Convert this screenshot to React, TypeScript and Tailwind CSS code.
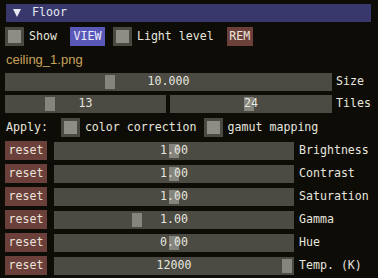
import React from 'react';

const mono = "font-['DejaVu_Sans_Mono',monospace] text-[11.6px] leading-none";

function Checkbox() {
  return (
    <div className="w-[19px] h-[19px] bg-[#4a4942] flex items-center justify-center shrink-0">
      <div className="w-[13px] h-[13px] bg-[#8d8c85]" />
    </div>
  );
}

// slider with value centered and grab at a given left offset
function Slider({ width, value, grab }: { width: number; value: string; grab: number }) {
  return (
    <div
      className="relative h-[18px] bg-[#4b4a43] flex items-center justify-center shrink-0"
      style={{ width }}
    >
      <div className="absolute top-[2px] bottom-[2px] w-[10px] bg-[#85847d]" style={{ left: grab }} />
      <span className={`relative text-[#e6e6df] ${mono}`}>{value}</span>
    </div>
  );
}

function ResetRow({ label, value, grab }: { label: string; value: string; grab: number }) {
  return (
    <div className="flex items-center h-[19px]">
      <div className={`w-[42px] h-[19px] bg-[#6b403a] text-[#ece4dc] flex items-center justify-center ${mono}`}>
        reset
      </div>
      <div className="ml-[7px]">
        <Slider width={240} value={value} grab={grab} />
      </div>
      <span className={`ml-[5px] text-[#e6e6df] ${mono}`}>{label}</span>
    </div>
  );
}

export default function App() {
  return (
    <div className="w-[378px] h-[278px] bg-[#0e0c07] overflow-hidden flex flex-col">
      {/* header */}
      <div className="mt-[4px] ml-[6px] w-[365px] h-[18px] bg-[#38386c] flex items-center">
        <svg width="8" height="8" viewBox="0 0 8 8" className="ml-[7px]">
          <polygon points="0,0 8,0 4,8" fill="#e8e8f0" />
        </svg>
        <span className={`ml-[11px] text-[#e8e8f0] ${mono}`}>Floor</span>
      </div>

      {/* toggles */}
      <div className="mt-[5px] ml-[5px] flex items-center h-[19px]">
        <Checkbox />
        <span className={`ml-[5px] text-[#e6e6df] ${mono}`}>Show</span>
        <div className={`ml-[13px] w-[35px] h-[19px] bg-[#5a58b6] text-[#ecebff] flex items-center justify-center ${mono}`}>
          VIEW
        </div>
        <div className="ml-[8px]">
          <Checkbox />
        </div>
        <span className={`ml-[5px] text-[#e6e6df] ${mono}`}>Light level</span>
        <div className={`ml-[13px] w-[26px] h-[19px] bg-[#6b403a] text-[#ece4dc] flex items-center justify-center ${mono}`}>
          REM
        </div>
      </div>

      <div className="mt-[3px] ml-[6px] h-[21px] flex items-center text-[13px] text-[#c9a35c] font-['Liberation_Sans',sans-serif]">
        ceiling_1.png
      </div>

      {/* size */}
      <div className="mt-[3px] ml-[5px] flex items-center">
        <Slider width={327} value="10.000" grab={100} />
        <span className={`ml-[4px] text-[#e6e6df] ${mono}`}>Size</span>
      </div>

      {/* tiles */}
      <div className="mt-[4px] ml-[5px] flex items-center">
        <Slider width={161} value="13" grab={40} />
        <div className="ml-[4px]">
          <Slider width={162} value="24" grab={74} />
        </div>
        <span className={`ml-[4px] text-[#e6e6df] ${mono}`}>Tiles</span>
      </div>

      {/* apply */}
      <div className="mt-[5px] ml-[6px] flex items-center h-[19px]">
        <span className={`text-[#e6e6df] ${mono}`}>Apply:</span>
        <div className="ml-[13px]">
          <Checkbox />
        </div>
        <span className={`ml-[5px] text-[#e6e6df] ${mono}`}>color correction</span>
        <div className="ml-[7px]">
          <Checkbox />
        </div>
        <span className={`ml-[5px] text-[#e6e6df] ${mono}`}>gamut mapping</span>
      </div>

      <div className="mt-[4px] ml-[5px] flex flex-col gap-[4px]">
        <ResetRow label="Brightness" value="1.00" grab={115} />
        <ResetRow label="Contrast" value="1.00" grab={115} />
        <ResetRow label="Saturation" value="1.00" grab={115} />
        <ResetRow label="Gamma" value="1.00" grab={78} />
        <ResetRow label="Hue" value="0.00" grab={115} />
        <ResetRow label="Temp. (K)" value="12000" grab={228} />
      </div>
    </div>
  );
}
